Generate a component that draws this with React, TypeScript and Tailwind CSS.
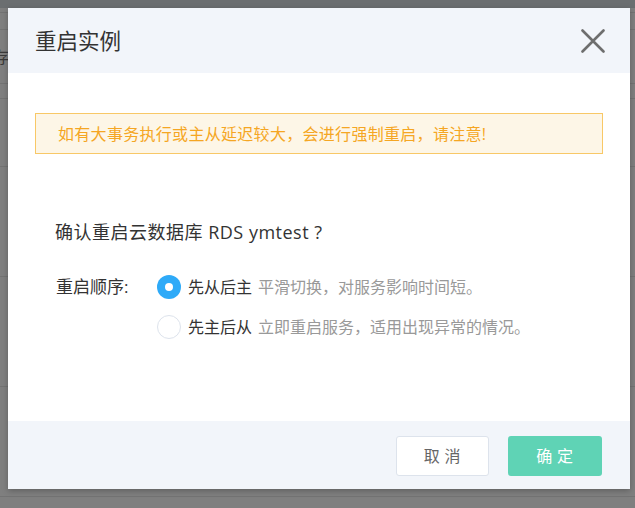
import React, { useState } from 'react'

const font = { fontFamily: '"Open Sans", "Noto Sans CJK SC", sans-serif' }

const Radio: React.FC<{ checked: boolean; onClick: () => void }> = ({ checked, onClick }) => (
  <span
    onClick={onClick}
    className={
      checked
        ? 'flex items-center justify-center w-[24px] h-[24px] rounded-full bg-[#2eaaf8] shrink-0 cursor-pointer'
        : 'flex items-center justify-center w-[24px] h-[24px] rounded-full bg-white border border-[#dde3ec] shrink-0 cursor-pointer'
    }
  >
    {checked && <span className="w-[8px] h-[8px] rounded-full bg-white" />}
  </span>
)

const options = [
  { label: '先从后主', desc: '平滑切换，对服务影响时间短。' },
  { label: '先主后从', desc: '立即重启服务，适用出现异常的情况。' },
]

export default function App() {
  const [order, setOrder] = useState(0)

  return (
    <div className="relative w-[635px] h-[508px] overflow-hidden bg-[#7f7f7f]" style={font}>
      {/* page behind the overlay */}
      <div className="absolute inset-0 flex flex-col">
        <div className="h-[8px] bg-[#6b6e70]" />
        <div className="h-[4px]" />
        <div className="h-[17px] border-t border-[#737373]" />
        <div className="h-[54px] border-t border-[#737373] flex items-center">
          <span className="text-[16px] text-[#3a3a3a] -ml-[7px]">存</span>
        </div>
        <div className="h-[15px] border-t border-[#737373]" />
        <div className="h-[68px] border-t border-[#737373]" />
        <div className="h-[110px] border-t border-[#737373]" />
        <div className="h-[110px] border-t border-[#737373]" />
        <div className="h-[110px] border-t border-[#737373]" />
        <div className="border-t border-[#737373]" />
      </div>

      {/* modal */}
      <div className="absolute left-[8px] top-[8px] w-[622px] h-[481px] bg-white flex flex-col shadow-[0_2px_6px_rgba(0,0,0,0.25)]">
        <div className="h-[65px] bg-[#f2f5fa] flex items-center justify-between pl-[27px] pr-[25px]">
          <h2 className="text-[21.5px] text-[#333] leading-none mt-[1px]">重启实例</h2>
          <button type="button" className="w-[24px] h-[24px] flex items-center justify-center">
            <svg width="24" height="24" viewBox="0 0 24 24">
              <path d="M1.5 1.5 L22.5 22.5 M22.5 1.5 L1.5 22.5" stroke="#6e6e6e" strokeWidth="2.6" strokeLinecap="round" />
            </svg>
          </button>
        </div>

        <div className="flex-1 px-[27px] pt-[40px]">
          <div className="h-[41px] bg-[#fdf6e7] border border-[#f8c867] flex items-center pl-[22px]">
            <span className="text-[16px] text-[#f5a623] tracking-[0.3px]">如有大事务执行或主从延迟较大，会进行强制重启，请注意!</span>
          </div>

          <p className="mt-[65px] pl-[20px] text-[18px] text-[#333] tracking-[0.5px]">确认重启云数据库 RDS ymtest ?</p>

          <div className="mt-[29px] pl-[21px] flex">
            <span className="text-[17px] text-[#333] w-[101px] leading-[24px]">重启顺序:</span>
            <div className="flex flex-col gap-[16px]">
              {options.map((o, i) => (
                <div key={o.label} className="flex items-center leading-[24px]">
                  <Radio checked={order === i} onClick={() => setOrder(i)} />
                  <span className="ml-[7px] text-[16px] text-[#333]">{o.label}</span>
                  <span className="ml-[6px] text-[16px] text-[#999]">{o.desc}</span>
                </div>
              ))}
            </div>
          </div>
        </div>

        <div className="h-[68px] bg-[#f2f5fa] flex items-start justify-end gap-[19px] pr-[28px] pt-[15px]">
          <button type="button" className="w-[93px] h-[40px] bg-white border border-[#dde3ec] rounded-[3px] text-[16px] text-[#666] tracking-[0.3em] pl-[4px]">
            取消
          </button>
          <button type="button" className="w-[94px] h-[40px] bg-[#5fd3b5] rounded-[3px] text-[16px] text-white tracking-[0.3em] pl-[4px]">
            确定
          </button>
        </div>
      </div>
    </div>
  )
}
